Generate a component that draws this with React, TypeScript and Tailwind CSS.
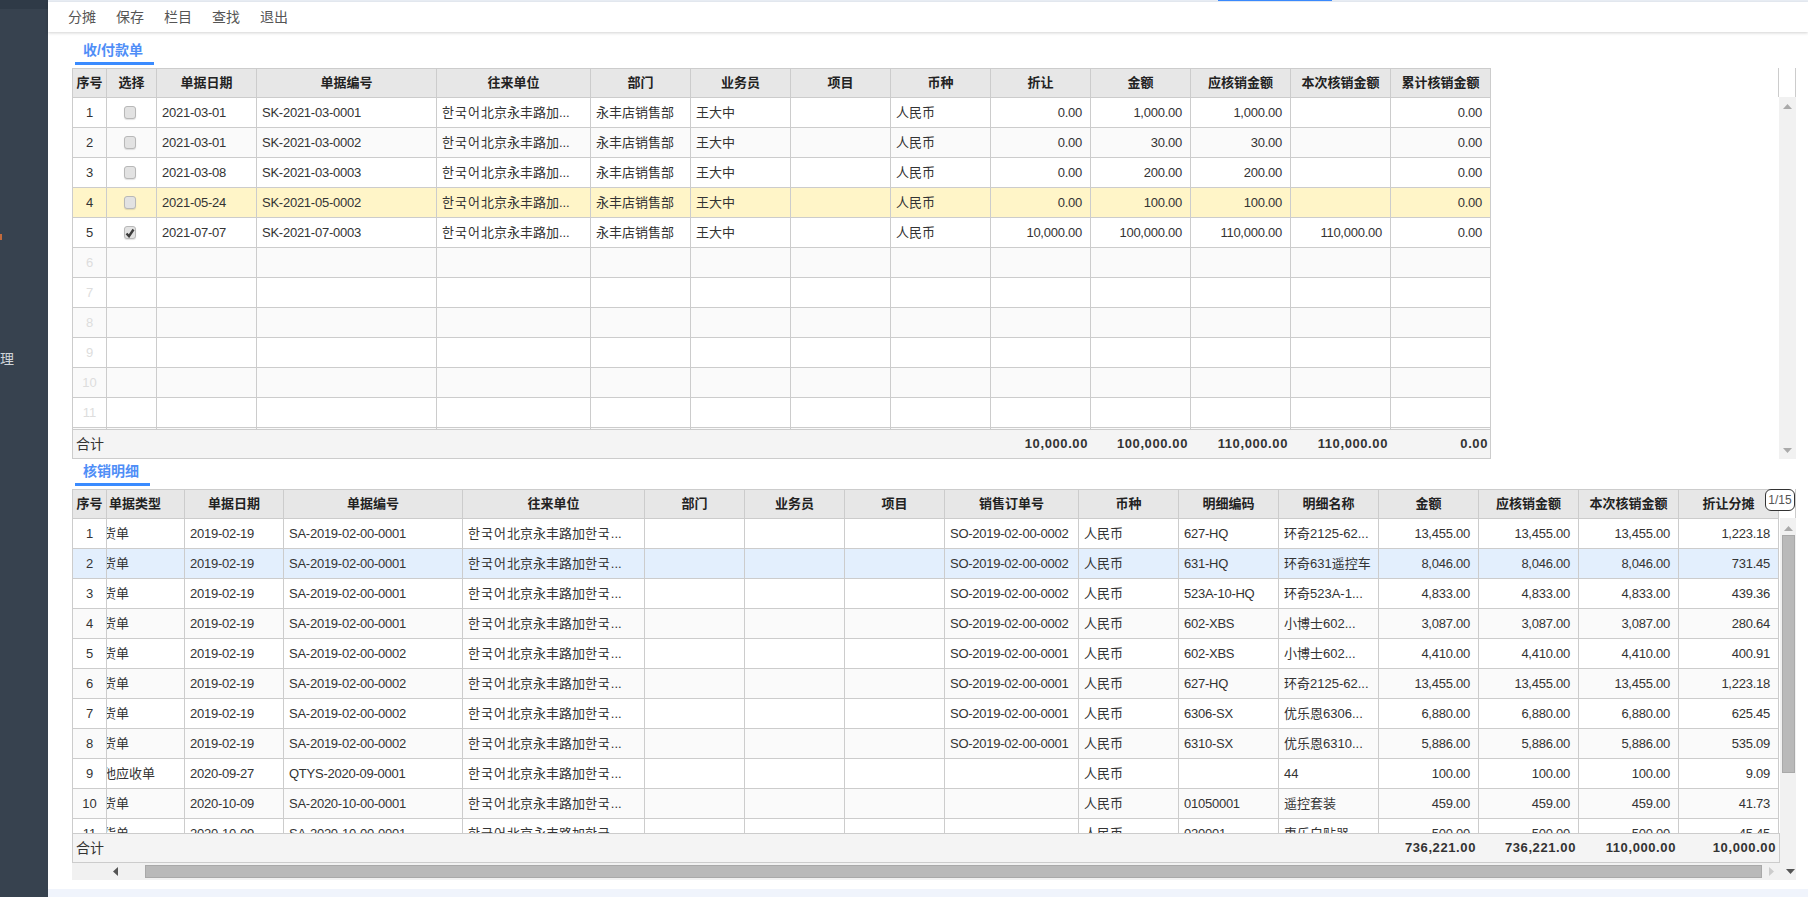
const firstCols = ["w-[34px]", "w-[50px]", "w-[100px]", "w-[180px]", "w-[154px]", "w-[100px]", "w-[100px]", "w-[100px]", "w-[100px]", "w-[100px]", "w-[100px]", "w-[100px]", "w-[100px]", "w-[100px]"];
const secondCols = ["w-[34px]", "w-[78px]", "w-[99px]", "w-[179px]", "w-[182px]", "w-[100px]", "w-[100px]", "w-[100px]", "w-[134px]", "w-[100px]", "w-[100px]", "w-[100px]", "w-[100px]", "w-[100px]", "w-[100px]", "w-[100px]"];

const firstHead = ["序号", "选择", "单据日期", "单据编号", "往来单位", "部门", "业务员", "项目", "币种", "折让", "金额", "应核销金额", "本次核销金额", "累计核销金额"];
const secondHead = ["序号", "单据类型", "单据日期", "单据编号", "往来单位", "部门", "业务员", "项目", "销售订单号", "币种", "明细编码", "明细名称", "金额", "应核销金额", "本次核销金额", "折让分摊"];

const firstRows = [
  { date: "2021-03-01", code: "SK-2021-03-0001", off: "0.00", amt: "1,000.00", due: "1,000.00", now: "" },
  { date: "2021-03-01", code: "SK-2021-03-0002", off: "0.00", amt: "30.00", due: "30.00", now: "" },
  { date: "2021-03-08", code: "SK-2021-03-0003", off: "0.00", amt: "200.00", due: "200.00", now: "" },
  { date: "2021-05-24", code: "SK-2021-05-0002", off: "0.00", amt: "100.00", due: "100.00", now: "" },
  { date: "2021-07-07", code: "SK-2021-07-0003", off: "10,000.00", amt: "100,000.00", due: "110,000.00", now: "110,000.00", checked: true },
];

const secondRows = [
  ["销货单", "2019-02-19", "SA-2019-02-00-0001", "SO-2019-02-00-0002", "627-HQ", "环奇2125-62...", "13,455.00", "1,223.18"],
  ["销货单", "2019-02-19", "SA-2019-02-00-0001", "SO-2019-02-00-0002", "631-HQ", "环奇631遥控车", "8,046.00", "731.45"],
  ["销货单", "2019-02-19", "SA-2019-02-00-0001", "SO-2019-02-00-0002", "523A-10-HQ", "环奇523A-1...", "4,833.00", "439.36"],
  ["销货单", "2019-02-19", "SA-2019-02-00-0001", "SO-2019-02-00-0002", "602-XBS", "小博士602...", "3,087.00", "280.64"],
  ["销货单", "2019-02-19", "SA-2019-02-00-0002", "SO-2019-02-00-0001", "602-XBS", "小博士602...", "4,410.00", "400.91"],
  ["销货单", "2019-02-19", "SA-2019-02-00-0002", "SO-2019-02-00-0001", "627-HQ", "环奇2125-62...", "13,455.00", "1,223.18"],
  ["销货单", "2019-02-19", "SA-2019-02-00-0002", "SO-2019-02-00-0001", "6306-SX", "优乐恩6306...", "6,880.00", "625.45"],
  ["销货单", "2019-02-19", "SA-2019-02-00-0002", "SO-2019-02-00-0001", "6310-SX", "优乐恩6310...", "5,886.00", "535.09"],
  ["其他应收单", "2020-09-27", "QTYS-2020-09-0001", "", "", "44", "100.00", "9.09"],
  ["销货单", "2020-10-09", "SA-2020-10-00-0001", "", "01050001", "遥控套装", "459.00", "41.73"],
  ["销货单", "2020-10-09", "SA-2020-10-00-0001", "", "020001", "惠乐白贴器", "500.00", "45.45"],
];

const cellBase = "h-[30px] border border-[#ccc] px-[5px] overflow-hidden whitespace-nowrap text-[13px] text-[#333]";
const latin = "tracking-[-0.25px]";
const numCell = "text-right pr-[8px] tracking-[-0.25px]";

function Arrow({ dir, color }: { dir: "up" | "down" | "left" | "right"; color: string }) {
  const points = { up: "0,5 4.5,0 9,5", down: "0,0 9,0 4.5,5", left: "5,0 5,9 0,4.5", right: "0,0 5,4.5 0,9" }[dir];
  const size = dir === "up" || dir === "down" ? { width: 9, height: 5 } : { width: 5, height: 9 };
  return (
    <svg {...size} className="shrink-0" fill={color}>
      <polygon points={points} />
    </svg>
  );
}

function Tab({ label, width }: { label: string; width: string }) {
  return (
    <div className={`ml-[3px] flex h-[27px] items-center border-b-[3px] border-[#3a8bff] pl-[8px] text-[14px] font-bold text-[#4f8ef7] ${width}`}>
      {label}
    </div>
  );
}

function Box({ checked }: { checked?: boolean }) {
  return (
    <div className="ml-[12px] flex h-[13px] w-[12px] items-center justify-center rounded-[3px] border border-[#b8b8b8] bg-[#e2e2e2] shadow-[0_1px_1px_rgba(0,0,0,0.12)]">
      {checked && (
        <svg width="10" height="10" viewBox="0 0 10 10" fill="none" stroke="#3d3d3d" strokeWidth="2.4">
          <path d="M1.5 5.5 L4 8.2 L8.5 1.5" />
        </svg>
      )}
    </div>
  );
}

function Company({ text }: { text: string }) {
  return (
    <>
      <span className="tracking-[1px]">한국어</span>
      {text}
    </>
  );
}

function HeadRow({ labels, leftIndex }: { labels: string[]; leftIndex?: number }) {
  return (
    <tr className="bg-[#e7e7e7]">
      {labels.map((label, i) => (
        <th
          key={i}
          className={`h-[29px] overflow-hidden whitespace-nowrap border border-[#ccc] text-[13px] font-bold text-[#222] ${i === leftIndex ? "pl-[2px] text-left" : "px-0 text-center"}`}
        >
          {label}
        </th>
      ))}
    </tr>
  );
}

function Total({ label, values, width, pad }: { label: string; values: string[]; width: string; pad: string }) {
  return (
    <div className={`flex h-[30px] items-center border border-[#ccc] bg-[#f4f4f4] text-[#333] ${width}`}>
      <div className="flex-1 pl-[3px] text-[14px]">{label}</div>
      {values.map((v, i) => (
        <div key={i} className={`w-[100px] text-right text-[13px] font-bold tracking-[0.6px] ${pad}`}>
          {v}
        </div>
      ))}
    </div>
  );
}

export default function App() {
  return (
    <div className="flex h-[897px] w-[1808px] overflow-hidden bg-white font-['Liberation_Sans','Noto_Sans_CJK_SC','Noto_Sans_CJK_KR',sans-serif]">
      <aside className="flex w-[48px] shrink-0 flex-col bg-[#37424f]">
        <div className="h-[9px] bg-[#2f3a47]" />
        <div className="mt-[225px] h-[6px] w-[2px] bg-[#c26a3c]" />
        <div className="mt-[111px] text-[14px] leading-[16px] text-[#cfd4d9]">理</div>
      </aside>

      <main className="flex min-w-0 flex-1 flex-col">
        <div className="h-[2px] bg-[#e9eef5]">
          <div className="ml-[1170px] h-[1px] w-[114px] bg-[#3a8bff]" />
        </div>
        <div className="flex h-[30px] items-center pl-[10px] text-[14px] text-[#555] shadow-[0_1px_3px_rgba(0,0,0,0.18)]">
          {["分摊", "保存", "栏目", "查找", "退出"].map((t) => (
            <button key={t} className="px-[10px]">
              {t}
            </button>
          ))}
        </div>

        <div className="flex flex-col pl-[24px] pr-[12px]">
          <div className="mb-[3px] mt-[6px]">
            <Tab label="收/付款单" width="w-[79px]" />
          </div>

          <div className="flex justify-between">
            <div className="w-[1419px]">
              <div className="h-[361px] overflow-hidden">
                <table className="w-[1419px] table-fixed border-collapse">
                  <colgroup>
                    {firstCols.map((c, i) => (
                      <col key={i} className={c} />
                    ))}
                  </colgroup>
                  <thead>
                    <HeadRow labels={firstHead} />
                  </thead>
                  <tbody>
                    {Array.from({ length: 12 }).map((_, i) => {
                      const row = firstRows[i];
                      const bg = i === 3 ? "bg-[#fff5c8]" : i % 2 === 1 ? "bg-[#fafafa]" : "bg-white";
                      if (!row) {
                        return (
                          <tr key={i} className={bg}>
                            <td className={`${cellBase} text-center text-[#ddd]`}>{i + 1}</td>
                            {firstCols.slice(1).map((_, j) => (
                              <td key={j} className={cellBase} />
                            ))}
                          </tr>
                        );
                      }
                      return (
                        <tr key={i} className={bg}>
                          <td className={`${cellBase} text-center`}>{i + 1}</td>
                          <td className={cellBase}>
                            <Box checked={row.checked} />
                          </td>
                          <td className={`${cellBase} ${latin}`}>{row.date}</td>
                          <td className={`${cellBase} ${latin}`}>{row.code}</td>
                          <td className={cellBase}>
                            <Company text="北京永丰路加..." />
                          </td>
                          <td className={cellBase}>永丰店销售部</td>
                          <td className={cellBase}>王大中</td>
                          <td className={cellBase} />
                          <td className={cellBase}>人民币</td>
                          <td className={`${cellBase} ${numCell}`}>{row.off}</td>
                          <td className={`${cellBase} ${numCell}`}>{row.amt}</td>
                          <td className={`${cellBase} ${numCell}`}>{row.due}</td>
                          <td className={`${cellBase} ${numCell}`}>{row.now}</td>
                          <td className={`${cellBase} ${numCell}`}>0.00</td>
                        </tr>
                      );
                    })}
                  </tbody>
                </table>
              </div>
              <Total label="合计" values={["10,000.00", "100,000.00", "110,000.00", "110,000.00", "0.00"]} width="w-[1419px]" pad="pr-[2px]" />
            </div>

            <div className="flex w-[18px] flex-col">
              <div className="h-[29px] border-x border-[#ccc]" />
              <div className="ml-[1px] flex flex-1 flex-col items-center justify-between bg-[#f1f1f1] pb-[6px] pt-[7px]">
                <Arrow dir="up" color="#aaa" />
                <Arrow dir="down" color="#aaa" />
              </div>
            </div>
          </div>

          <Tab label="核销明细" width="w-[75px]" />

          <div className="relative mt-[3px] w-[1724px]">
            <div className="flex">
              <div className="w-[1708px]">
                <div className="h-[344px] overflow-hidden">
                  <table className="w-[1706px] table-fixed border-collapse">
                    <colgroup>
                      {secondCols.map((c, i) => (
                        <col key={i} className={c} />
                      ))}
                    </colgroup>
                    <thead>
                      <HeadRow labels={secondHead} leftIndex={1} />
                    </thead>
                    <tbody>
                      {secondRows.map((r, i) => (
                        <tr key={i} className={i === 1 ? "bg-[#e3effd]" : i % 2 === 1 ? "bg-[#fafafa]" : "bg-white"}>
                          <td className={`${cellBase} text-center`}>{i + 1}</td>
                          <td className={cellBase}>
                            <div className="ml-[-22px]">{r[0]}</div>
                          </td>
                          <td className={`${cellBase} ${latin}`}>{r[1]}</td>
                          <td className={`${cellBase} ${latin}`}>{r[2]}</td>
                          <td className={cellBase}>
                            <Company text="北京永丰路加" />
                            <span className="tracking-[1px]">한국</span>...
                          </td>
                          <td className={cellBase} />
                          <td className={cellBase} />
                          <td className={cellBase} />
                          <td className={`${cellBase} ${latin}`}>{r[3]}</td>
                          <td className={cellBase}>人民币</td>
                          <td className={`${cellBase} ${latin}`}>{r[4]}</td>
                          <td className={cellBase}>{r[5]}</td>
                          <td className={`${cellBase} ${numCell}`}>{r[6]}</td>
                          <td className={`${cellBase} ${numCell}`}>{r[6]}</td>
                          <td className={`${cellBase} ${numCell}`}>{r[6]}</td>
                          <td className={`${cellBase} ${numCell}`}>{r[7]}</td>
                        </tr>
                      ))}
                    </tbody>
                  </table>
                </div>
                <Total label="合计" values={["736,221.00", "736,221.00", "110,000.00", "10,000.00"]} width="w-[1708px]" pad="pr-[3px]" />
              </div>

              <div className="flex w-[16px] flex-col">
                <div className="h-[29px] border-r border-[#ccc]" />
                <div className="flex flex-1 flex-col items-center bg-[#f1f1f1] pt-[8px]">
                  <Arrow dir="up" color="#aaa" />
                  <div className="mt-[4px] h-[238px] w-[13px] border border-[#a9a9a9] bg-[#b9b9b9]" />
                </div>
              </div>
            </div>

            <div className="-mt-[1px] flex h-[18px] items-center bg-[#f1f1f1]">
              <div className="ml-[41px] mr-[27px]">
                <Arrow dir="left" color="#555" />
              </div>
              <div className="h-[13px] w-[1617px] border border-[#a9a9a9] bg-[#b9b9b9]" />
              <div className="ml-[7px] mr-[12px]">
                <Arrow dir="right" color="#ccc" />
              </div>
              <Arrow dir="down" color="#555" />
            </div>

            <div className="absolute right-[1px] top-0 flex h-[22px] w-[30px] items-center justify-center rounded-[6px] border border-[#333] bg-white text-[12px] text-[#555]">
              1/15
            </div>
          </div>
        </div>

        <div className="flex-1" />
        <div className="h-[8px] bg-[#f0f4fc]" />
      </main>
    </div>
  );
}
